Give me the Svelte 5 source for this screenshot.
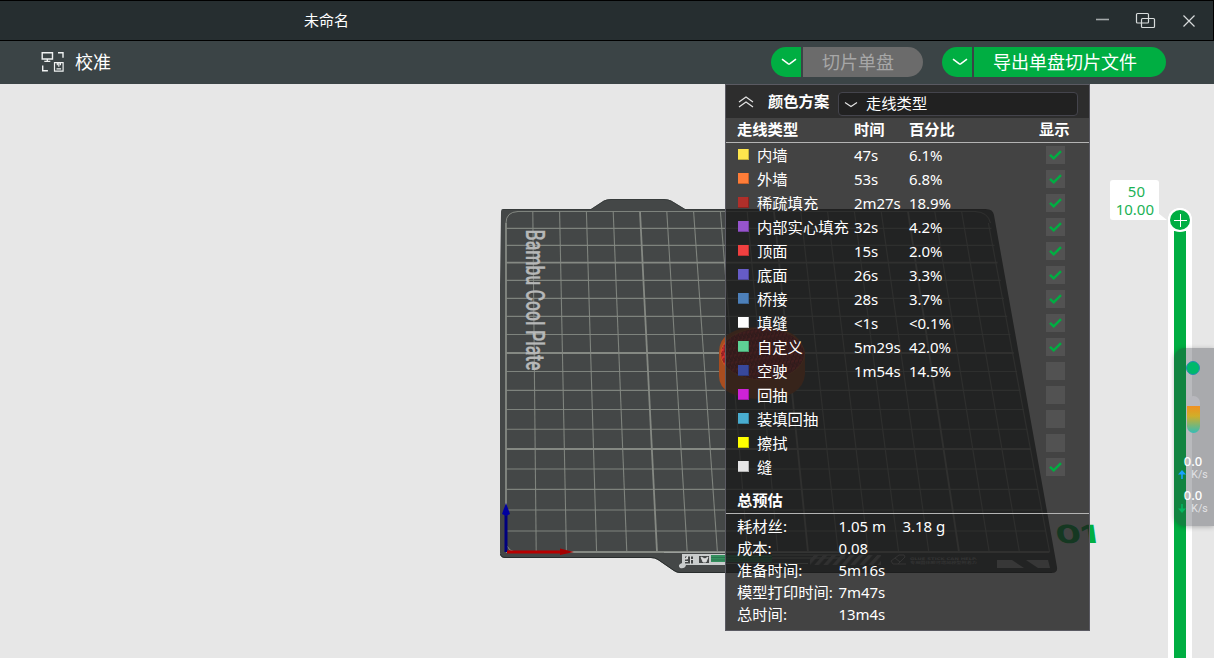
<script>
  const rows = [
    ['#ffe64d', '内墙', '47s', '6.1%', true],
    ['#ff7d38', '外墙', '53s', '6.8%', true],
    ['#b02f2a', '稀疏填充', '2m27s', '18.9%', true],
    ['#9654cc', '内部实心填充', '32s', '4.2%', true],
    ['#f04040', '顶面', '15s', '2.0%', true],
    ['#665cc7', '底面', '26s', '3.3%', true],
    ['#4d80ba', '桥接', '28s', '3.7%', true],
    ['#ffffff', '填缝', '<1s', '<0.1%', true],
    ['#5ed194', '自定义', '5m29s', '42.0%', true],
    ['#38489b', '空驶', '1m54s', '14.5%', false],
    ['#cd22d6', '回抽', '', '', false],
    ['#49add0', '装填回抽', '', '', false],
    ['#ffff00', '擦拭', '', '', false],
    ['#e6e6e6', '缝', '', '', true]
  ];
  const totals = [
    ['耗材丝:', '1.05 m', '3.18 g'],
    ['成本:', '0.08', ''],
    ['准备时间:', '5m16s', ''],
    ['模型打印时间:', '7m47s', ''],
    ['总时间:', '13m4s', '']
  ];
  const ys = [211.5, 228.4, 245.4, 262.6, 280.4, 298.4, 316.4, 334.5, 353, 371.5, 390.4, 409.5, 429.3, 449, 469, 489.4, 510, 531, 552];
  const cols = Array.from({ length: 19 }, (_, i) => i);
  const rightAt = (y) => 988.4 + ((y - 211.5) / 340.5) * 61;
</script>

<div class="app">
  <header class="title">
    <span class="name">未命名</span>
    <svg class="win" width="108" height="20" viewBox="0 0 108 20" fill="none" stroke="#d8dcdc" stroke-width="1.2">
      <path d="M0 9.5H13" stroke="#a4a9aa" stroke-width="1.6" />
      <rect x="40.5" y="3.5" width="12" height="9.5" rx="1" />
      <rect x="45.5" y="8.5" width="13" height="9" rx="1" />
      <path d="M87.5 5.500l11 11M98.500 5.500l-11 11" />
    </svg>
  </header>
  <nav class="bar">
    <svg class="cal" width="24" height="22" viewBox="0 0 24 22" fill="none" stroke="#f0f2f2" stroke-width="1.4">
      <path d="M1.200 1.700h10.300v6.300H1.200zM6.300 8v2.200M3.300 10.400h6M17 1.700h5v5M1.700 14.500v5.200h5.200" />
      <path d="M13.500 11.700h8.600v8.400h-8.600zM17.800 12v3.800M16.300 12.200v2M19.400 12.200v2M15.500 17.800h4.600" stroke-width="1.2" />
    </svg>
    <span class="callabel">校准</span>
    <div class="pill first">
      <button class="drop" aria-label="切片"><svg width="16" height="8" viewBox="0 0 16 8"><path d="M1 1.200L7 5.700Q8 6.400 9 5.700L15 1.200" /></svg></button>
      <button class="main off">切片单盘</button>
    </div>
    <div class="pill second">
      <button class="drop" aria-label="导出"><svg width="16" height="8" viewBox="0 0 16 8"><path d="M1 1.200L7 5.700Q8 6.400 9 5.700L15 1.200" /></svg></button>
      <button class="main">导出单盘切片文件</button>
    </div>
  </nav>

  <main class="stage">
    <svg class="scene" width="1214" height="574" viewBox="0 84 1214 574">
      <defs>
        <pattern id="weave" width="4" height="7" patternUnits="userSpaceOnUse" patternTransform="rotate(-8)">
          <rect width="4" height="7" fill="#dc3232" />
          <path d="M0 0L2 3.500L0 7M3 0v5" stroke="#64151a" stroke-width="1" fill="none" />
        </pattern>
        <pattern id="hatch" width="9" height="10" patternUnits="userSpaceOnUse" patternTransform="skewX(-42)">
          <rect width="4.500" height="10" fill="#858888" />
        </pattern>
      </defs>
      <path d="M504 209H591L604 200.500Q607 199 611 199H664Q668 199 671 200.500L685 209H986Q993 209 994 215L1057 567Q1058 573 1052 573H680Q677 573 674 571L658 560Q655 558 651 558H505Q500 558 500 553V285L501 212Q501 209 504 209Z" fill="#444747" />
      <path d="M500.500 554Q501 557.500 506 557.500H651Q655 557.500 658 559.500L674 570.500Q677 572.500 680 572.500H1052" fill="none" stroke="#292d2d" />
      <path d="M501.500 210Q502 209.500 504 209.500H591L604 201Q607 199.500 611 199.500H664Q668 199.500 671 201L685 209.500H986" fill="none" stroke="#343838" stroke-width=".8" />
      <g stroke="#858983" fill="none">
        {#each ys as y, i}
          <line x1={i === 0 ? 518 : 506} y1={y} x2={i === 0 ? 975 : rightAt(y)} y2={y} stroke-width={i % 5 === 3 ? 1.9 : 1.1} stroke-opacity={i % 5 === 3 ? 1 : 0.9} />
        {/each}
        {#each cols as i}
          <line x1={506 + i * 26.8} y1={i === 0 || i === 18 ? 223 : 211.5} x2={506 + i * 30.2} y2="552" stroke-width={i % 5 === 0 ? 1.8 : 1.1} stroke-opacity={i % 5 === 0 ? 1 : 0.9} />
        {/each}
        <path d="M506 223Q506 212 518 211.500M975 211.500Q988 212 990.500 223M507 546Q509 551 515 552" />
      </g>
      <text class="plate" transform="translate(525.500 229.500) rotate(90)" textLength="141" lengthAdjust="spacingAndGlyphs">Bambu Cool Plate</text>

      <path d="M719 352Q719 327 762 327Q804 327 805 358V374Q803 399 762 399Q719 398 719 376Z" fill="#a94d1f" />
      <ellipse cx="762.500" cy="354" rx="42" ry="26" fill="url(#weave)" stroke="#c65a24" />

      <path d="M682 554H725V565H686Q685 569 680 568Q677 565 682 563Z" fill="#c9cccc" />
      <path d="M685 556.500h8v7h-8zM699 556h10v7h-10z" fill="#444747" />
      <path d="M687.500 556v3h-3M690.500 556v8M685 561.500h3M690 559.500h4M701 557l4 2 3-2-2 5h-3z" fill="#ddd" stroke="#d5d7d7" />
      <rect x="711" y="555" width="61" height="7" fill="#35905f" />
      <path d="M711 557.500h61M711 560h61" stroke="#256d49" stroke-width=".7" />
      <path d="M664 552.500H850M772 555H845M772 558H845M725 563.500H808" stroke="#9b9e9b" stroke-width="1" />
      <rect x="810" y="555" width="71" height="10" fill="url(#hatch)" />
      <path d="M891 561l8-6h5l1 2-7 7h-5zM895 558l5 4M898 564h8" fill="none" stroke="#999" />
      <text class="tiny" x="910" y="559.500" textLength="67" lengthAdjust="spacingAndGlyphs">GLUE STICK CAN HELP.</text>
      <text class="tiny cn" x="910" y="564" textLength="67" lengthAdjust="spacingAndGlyphs">专用固体胶可增加模型附着力</text>
      <path d="M997 560h15l12 8H997ZM1026 560h22l2 8h-12z" fill="#a9abab" />

      <path d="M506 552V515" stroke="#00007d" stroke-width="3" />
      <path d="M506 503L510 514L506 516L502 514Z" fill="#0000a0" />
      <path d="M507 552H561" stroke="#b80000" stroke-width="3" />
      <path d="M560 548.500L574 552L560 555Z" fill="#a40000" />
      <text class="num" transform="translate(1057 543) skewX(8)" textLength="41" lengthAdjust="spacingAndGlyphs">01</text>

      <path d="M1168 658V220A12 12 0 0 1 1192 220V658Z" fill="#fff" />
      <rect x="1174" y="231" width="12" height="427" fill="#00ae42" />
      <circle cx="1180" cy="220" r="12" fill="#fff" />
      <circle cx="1180" cy="220" r="10" fill="#00ae42" />
      <path d="M1174 220.500H1187M1180.500 214V227" stroke="#fff" />
      <path d="M1158 213L1167 220H1157Z" fill="#fff" />
    </svg>

    <div class="tip"><span>50</span><span>10.00</span></div>

    <section class="panel">
      <div class="phead">
        <svg width="16" height="12" viewBox="0 0 16 12" fill="none" stroke="#e4e4e4" stroke-width="1.2"><path d="M1 6L8 1L15 6M1 11L8 6L15 11" /></svg>
        <b>颜色方案</b>
        <div class="select">
          <svg width="14" height="7" viewBox="0 0 14 7" fill="none" stroke="#e4e4e4" stroke-width="1.2"><path d="M1 1.500L7 5.500L13 1.500" /></svg>
          <span>走线类型</span>
        </div>
      </div>
      <div class="cols"><b>走线类型</b><b>时间</b><b>百分比</b><b class="show">显示</b></div>
      {#each rows as [color, label, time, pct, on]}
        <div class="row">
          <i class="sw" style="background:{color}"></i>
          <span>{label}</span><span class="v">{time}</span><span class="v">{pct}</span>
          <span class="box">{#if on}<svg width="13" height="10" viewBox="0 0 13 10"><path d="M1 4.800L4.700 8.300L12 1.200" fill="none" stroke="#00ae42" stroke-width="2.500" /></svg>{/if}</span>
        </div>
      {/each}
      <div class="sum"><b>总预估</b></div>
      <div class="totals">
        {#each totals as [k, v, w]}
          <div class="trow"><span>{k}</span><span class="v">{v}</span><span class="v">{w}</span></div>
        {/each}
      </div>
    </section>

    <aside class="net">
      <i class="dot"></i>
      <i class="gauge"></i>
      <div class="rate"><b>0.0</b><div class="unit"><svg width="8" height="9" viewBox="0 0 8 9"><path d="M4 0L8 4.500H4.800V9H3.200V4.500H0Z" fill="#18a0ff" /></svg><span>K/s</span></div></div>
      <div class="rate"><b>0.0</b><div class="unit"><svg width="8" height="9" viewBox="0 0 8 9"><path d="M4 9L8 4.500H4.800V0H3.200V4.500H0Z" fill="#05b660" /></svg><span>K/s</span></div></div>
    </aside>
  </main>
</div>

<style>
  :global(body) { margin: 0; overflow: hidden; }
  .app { width: 1214px; height: 658px; display: flex; flex-direction: column; font-family: "Noto Sans", "Noto Sans CJK SC", sans-serif; background: #e7e7e7; }
  .title { box-sizing: border-box; height: 41px; background: #262e30; border: 1px solid #000; border-left: 0; display: flex; align-items: center; justify-content: space-between; padding: 0 8px 2px 304px; color: #fff; font: 15px "Noto Sans CJK SC", sans-serif; }
  .win { margin-right: 1px; }
  .bar { box-sizing: border-box; height: 43px; padding-bottom: 2px; background: #3b4446; display: flex; align-items: center; color: #fff; font: 18px "Noto Sans CJK SC", sans-serif; }
  .cal { margin: 1px 0 0 41px; }
  .callabel { margin-left: 10px; width: 100px; padding-bottom: 2px; }
  .pill { display: flex; gap: 2px; height: 30px; }
  .first { margin-left: 596px; }
  .second { margin-left: 19px; }
  button { border: 0; padding: 0; margin: 0; background: #00ae42; color: #fff; font: inherit; }
  .drop { width: 30px; border-radius: 15px 0 0 15px; display: flex; align-items: center; justify-content: center; padding-left: 5px; }
  .drop path { fill: none; stroke: #fff; stroke-width: 1.5; }
  .main { width: 192px; border-radius: 0 15px 15px 0; line-height: 26px; padding: 0 10px 2px 0; }
  .off { width: 120px; background: #6b6b6b; color: #a7a7a7; }
  .stage { position: relative; height: 574px; overflow: hidden; }
  .scene { display: block; }
  .plate { font: 500 26px Roboto, sans-serif; fill: #b6b8b8; stroke: #b6b8b8; stroke-width: .3; }
  .tiny { font: bold 3.5px "DejaVu Sans", sans-serif; fill: #949797; }
  .cn { font: bold 3px "Noto Sans CJK SC", sans-serif; }
  .num { font: 800 25px Inter, sans-serif; fill: #00ae42; }
  .tip { position: absolute; left: 1110px; top: 96px; width: 49px; height: 40px; box-sizing: border-box; padding: 2px 5px 0 0; background: #fff; border-radius: 3px; display: flex; flex-direction: column; align-items: flex-end; color: #1bb255; font-size: 15px; line-height: 18px; }
  .tip span:first-child { padding-right: 9px; }
  .panel { position: absolute; left: 725px; top: 0; width: 365px; height: 547px; box-sizing: border-box; border: 1px solid #5a5a62; background: rgba(26, 26, 26, .8); color: #fff; font-size: 15.3px; overflow: hidden; white-space: nowrap; }
  .phead { height: 33px; background: rgba(32, 32, 32, .6); display: flex; align-items: center; padding-left: 12px; }
  .phead b { margin-left: 14px; width: 70px; padding-bottom: 3px; }
  .select { box-sizing: border-box; width: 240px; height: 24px; margin-top: 5px; border: 1px solid #44444c; border-radius: 4px; background: #212121; display: flex; align-items: center; gap: 8px; padding-left: 5px; }
  .select span { line-height: 20px; padding-bottom: 2px; }
  .cols { box-sizing: border-box; height: 25px; border-bottom: 1px solid #b4b4b4; display: grid; grid-template-columns: 117px 55px 130px 40px; padding-left: 11px; line-height: 22px; }
  .row { height: 24px; display: grid; grid-template-columns: 20px 97px 55px 137px 19px; align-items: center; padding-left: 11px; line-height: 24px; }
  .v { font-size: 15px; letter-spacing: -.05px; }
  .sw { width: 11px; height: 11px; margin: 0 0 2px 1px; box-shadow: inset -1px -1px rgba(0, 0, 0, .22); }
  .box { width: 19px; height: 18px; background: #525252; display: flex; align-items: center; justify-content: center; }
  .sum { box-sizing: border-box; height: 35px; border-bottom: 1px solid #b4b4b4; padding: 9px 0 0 11px; line-height: 24px; }
  .totals { padding: 1px 0 0 11px; }
  .trow { height: 22px; line-height: 22px; display: grid; grid-template-columns: 101.500px 64px 60px; }
  .net { position: absolute; left: 1174px; top: 264px; width: 40px; height: 178px; box-sizing: border-box; background: rgba(50, 54, 62, .34); border-radius: 11px 0 0 11px; box-shadow: 0 1px 5px rgba(0, 0, 0, .25); display: flex; flex-direction: column; align-items: center; padding: 13px 2px 0 0; color: #fff; }
  .dot { width: 12px; height: 12px; border: 1px solid #278fb0; border-radius: 50%; background: #00b96b; flex: none; }
  .gauge { width: 13px; height: 37px; margin: 21px 0; border-radius: 7px; background: linear-gradient(#b8b8bd 0 10px, #f09020 10px, #d1ae29 20px, #34bdb5 37px); flex: none; }
  .rate { height: 34px; display: flex; flex-direction: column; align-items: center; }
  .rate b { font-weight: 500; font-size: 13px; line-height: 14px; }
  .unit { font: 10.5px Roboto, sans-serif; line-height: 13px; color: #e3e3e6; display: flex; align-items: center; gap: 5px; }
</style>
